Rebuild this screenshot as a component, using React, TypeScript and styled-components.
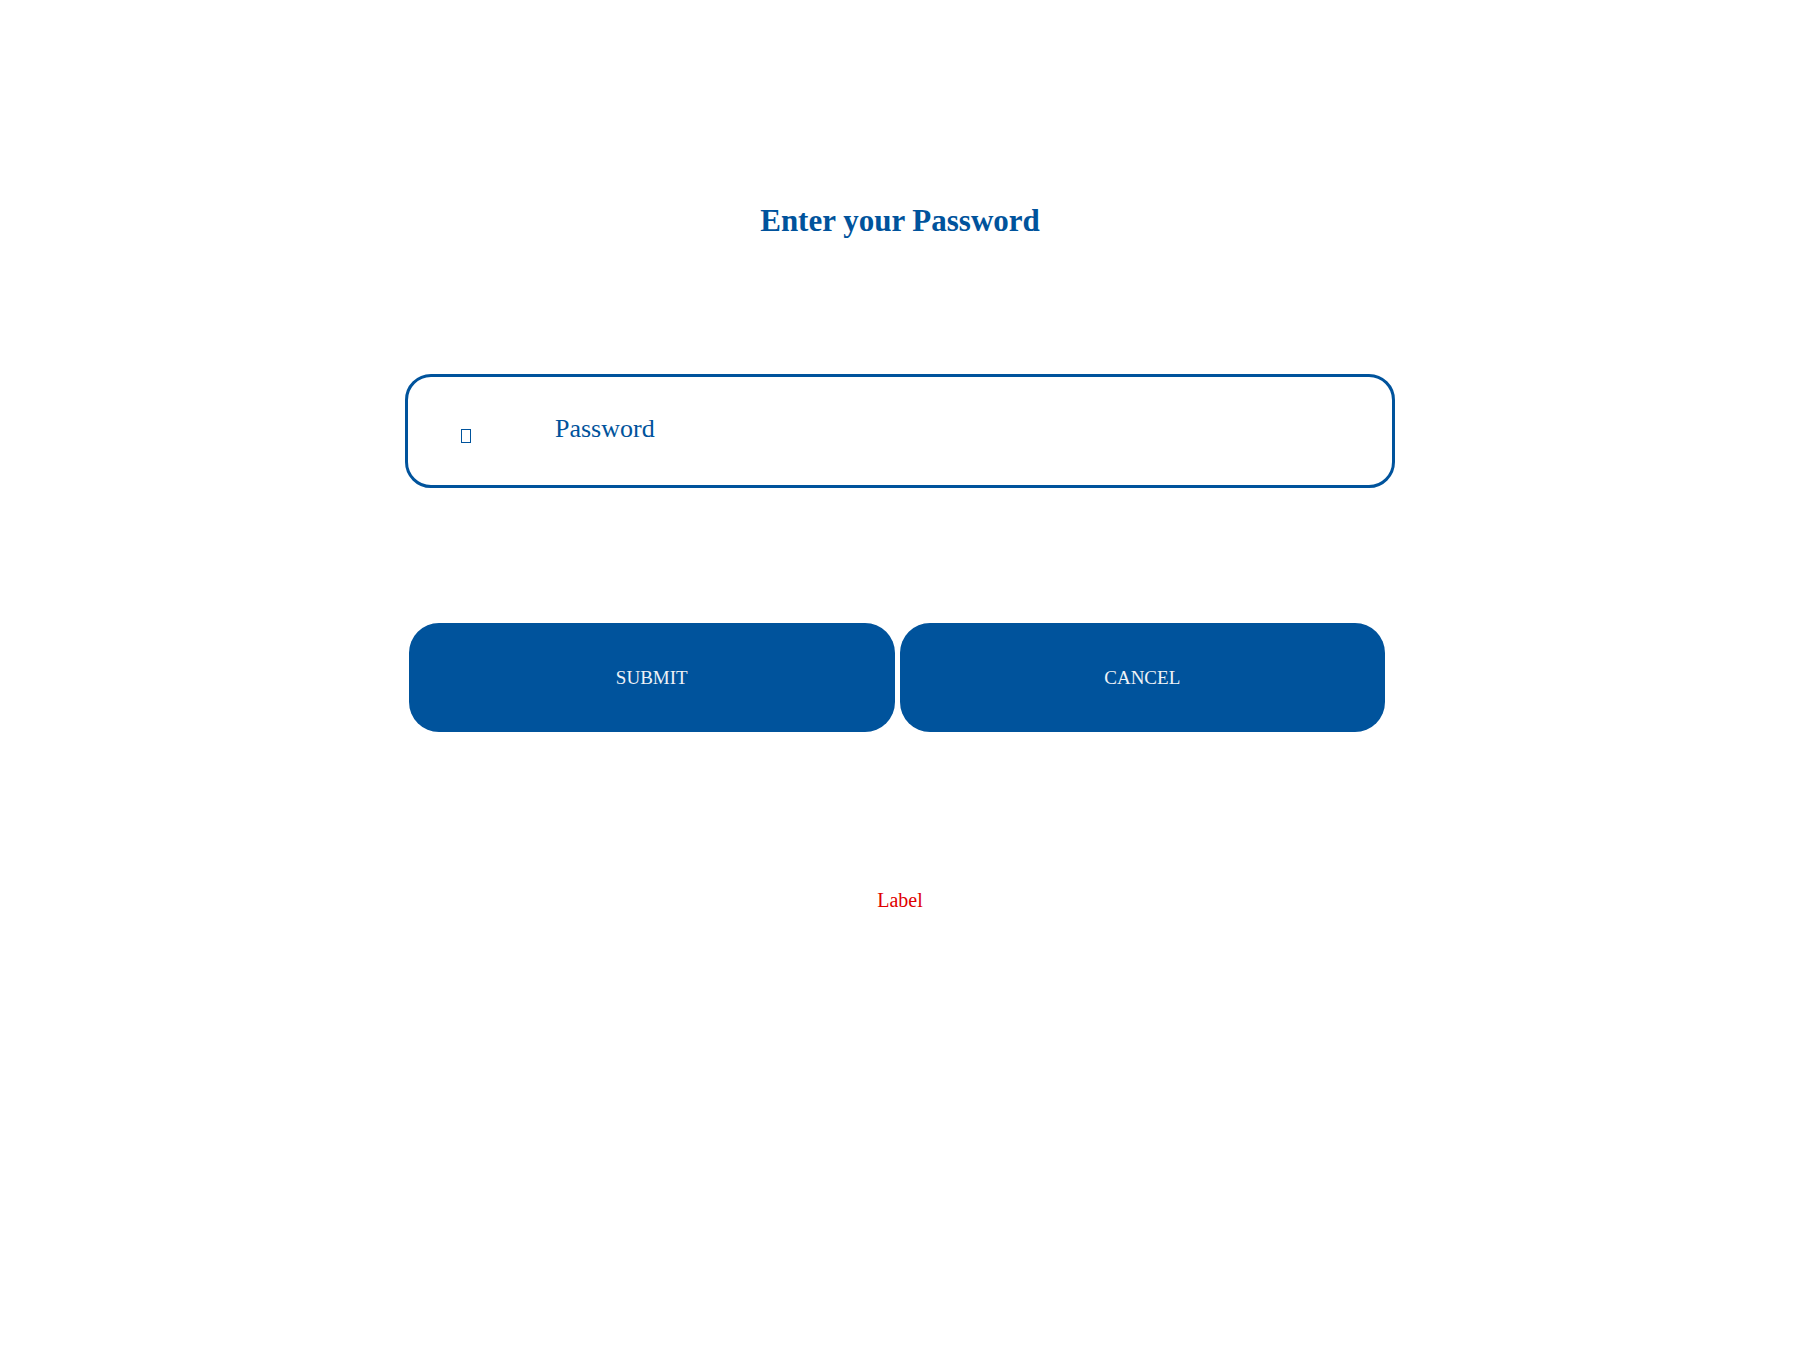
import styled, { createGlobalStyle } from 'styled-components';

const brand = '#00539c';

const GlobalStyle = createGlobalStyle`
  body {
    margin: 0;
    background: #ffffff;
    font-family: 'Liberation Serif', 'Times New Roman', serif;
  }
`;

const Page = styled.div`
  width: 990px;
  margin: 0 auto;
  padding-top: 205px;
  display: flex;
  flex-direction: column;
  align-items: stretch;
`;

const Title = styled.h1`
  margin: 0;
  font-size: 31px;
  line-height: 32px;
  font-weight: 700;
  color: ${brand};
  text-align: center;
`;

const Field = styled.label`
  margin-top: 137px;
  height: 114px;
  box-sizing: border-box;
  border: 3px solid ${brand};
  border-radius: 26px;
  display: flex;
  align-items: center;
  padding-left: 53px;
  cursor: text;
`;

// missing-glyph box from the icon font
const Tofu = styled.span`
  width: 10px;
  height: 14px;
  box-sizing: border-box;
  border: 1px solid ${brand};
  margin-top: 10px;
  flex: none;
`;

const Input = styled.input`
  flex: 1;
  margin-left: 84px;
  margin-right: 30px;
  padding: 0 0 4px;
  border: none;
  outline: none;
  background: transparent;
  font-family: inherit;
  font-size: 26px;
  color: ${brand};
  &::placeholder {
    color: ${brand};
    opacity: 1;
  }
`;

const Actions = styled.div`
  margin-top: 135px;
  margin-left: 4px;
  width: 976px;
  display: grid;
  grid-template-columns: 1fr 1fr;
  gap: 5px;
`;

const Button = styled.button`
  height: 109px;
  padding: 0;
  border: none;
  border-radius: 30px;
  background: ${brand};
  color: #eef2f7;
  font-family: inherit;
  font-size: 19px;
  text-transform: uppercase;
  cursor: pointer;
`;

const Message = styled.div`
  margin-top: 158px;
  font-size: 20px;
  line-height: 20px;
  color: #e00000;
  text-align: center;
`;

export default function App() {
  return (
    <>
      <GlobalStyle />
      <Page>
        <Title>Enter your Password</Title>
        <Field>
          <Tofu />
          <Input type="password" placeholder="Password" />
        </Field>
        <Actions>
          <Button>Submit</Button>
          <Button>Cancel</Button>
        </Actions>
        <Message>Label</Message>
      </Page>
    </>
  );
}
